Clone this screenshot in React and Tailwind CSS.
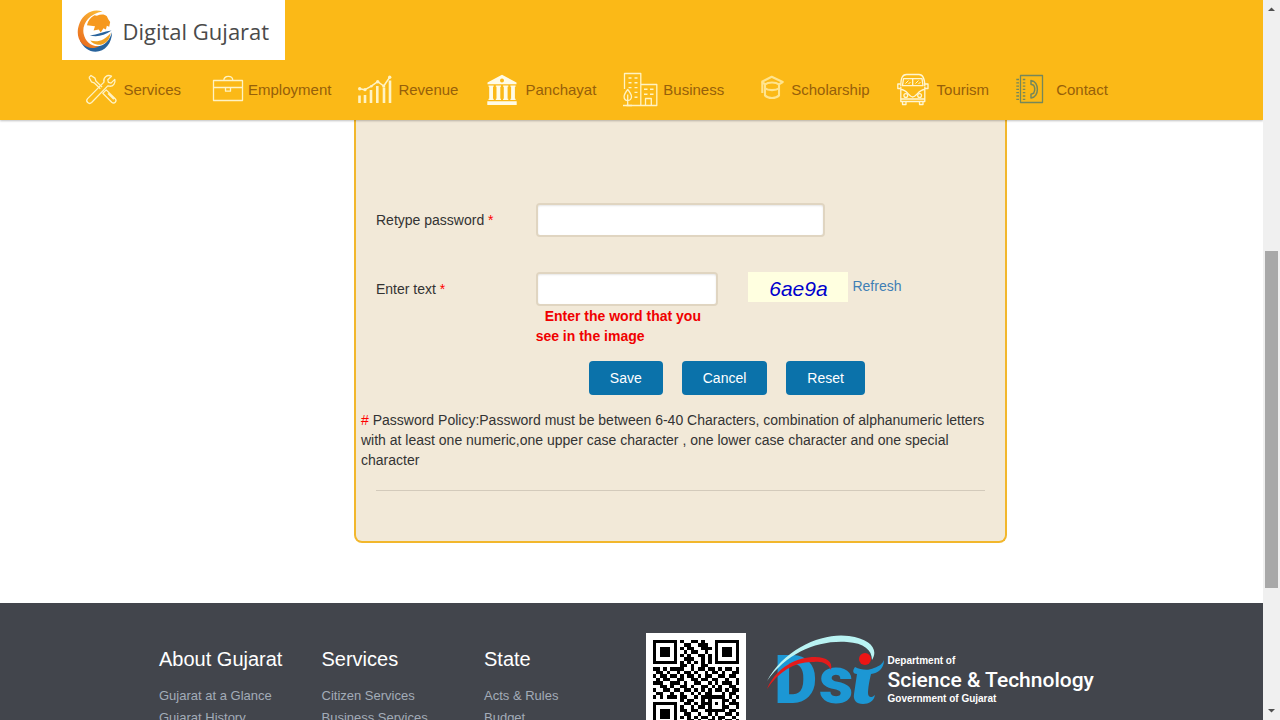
const navItems = [
  { label: "Services", Icon: ToolsIcon },
  { label: "Employment", Icon: BriefcaseIcon },
  { label: "Revenue", Icon: ChartIcon },
  { label: "Panchayat", Icon: BankIcon },
  { label: "Business", Icon: BuildingsIcon },
  { label: "Scholarship", Icon: ScholarIcon },
  { label: "Tourism", Icon: BusIcon },
  { label: "Contact", Icon: PhoneBookIcon },
];

const footerColumns = [
  {
    title: "About Gujarat",
    links: ["Gujarat at a Glance", "Gujarat History"],
  },
  {
    title: "Services",
    links: ["Citizen Services", "Business Services"],
  },
  {
    title: "State",
    links: ["Acts & Rules", "Budget"],
  },
];

const qrRows = [
  "1111111010011010001111111",
  "1000001001100111001000001",
  "1011101010110011101011101",
  "1011101001011001001011101",
  "1011101010100110101011101",
  "1000001001110010101000001",
  "1111111010101010101111111",
  "0000000011010011000000000",
  "1101011110010110110101101",
  "0110100101101001011010011",
  "1011011010110101100110110",
  "0101100110011011011001001",
  "1110011101001100101011101",
  "0011010011010011010100110",
  "1001101101101010101101011",
  "0110010010010101100010110",
  "1010111011001011111110101",
  "0000000010110010100011010",
  "1111111001101011101010111",
  "1000001010010110100011001",
  "1011101011011001111110110",
  "1011101001100100101001101",
  "1011101010101011010110010",
  "1000001000110100110101101",
  "1111111010011011001011011",
];

function NavSvg({ children, stroke = "#fff3c4" }) {
  return (
    <svg
      viewBox="0 0 40 40"
      className="h-10 w-10 shrink-0"
      fill="none"
      stroke={stroke}
      strokeWidth="1.3"
      strokeLinejoin="round"
      aria-hidden="true"
    >
      {children}
    </svg>
  );
}

function ToolsIcon() {
  return (
    <NavSvg>
      <path d="M27.5 6.2 23.8 9.8l.6 2.6 2.6.7 3.8-3.7c1 3.6-1.6 7.2-5.4 6.8l-1.6-.3L7.6 32.5c-2.6 2.5-6.5-1.2-4-3.9L20 12.1c-1.2-4.6 3-8 7.5-5.900Z" />
      <path d="m5 7.400 2-1.900 4 2.600.9 2.900 6.200 6.100M16.300 18.800l-6.200-6-2.700-1L5 7.400M20.500 21.600l1.700-1.700 9 8.800c2.200 2.500-.9 5.700-3.500 3.500l-8.900-8.900 1.700-1.700M24 23.500l5.800 5.800" />
    </NavSvg>
  );
}

function BriefcaseIcon() {
  return (
    <NavSvg>
      <path d="M5.5 10.5h29v20h-29zM5.5 17.5h29M15.8 10.500c0-5.400 9-5.400 9 0M17.500 17.500v3.700h5v-3.700" />
    </NavSvg>
  );
}

function ChartIcon() {
  return (
    <NavSvg>
      <path
        d="M1.5 25.500V33M7 25v8M13 20v13M19.300 16v17M26 17.500V33M32 10.500V33"
        strokeWidth="2.6"
      />
      <path d="m1.500 18.700 5.500 1 6.300-3.500 6.400-4.500 6 4.300 6-8.700" strokeWidth="1.5" />
      <g fill="#fff3c4" stroke="none">
        <circle cx="1.7" cy="18.7" r="1.7" />
        <circle cx="7" cy="19.7" r="1.6" />
        <circle cx="13.3" cy="16.2" r="1.3" />
        <circle cx="19.7" cy="11.7" r="1.7" />
        <circle cx="25.7" cy="16" r="1.6" />
        <circle cx="31.7" cy="7.3" r="1.7" />
      </g>
    </NavSvg>
  );
}

function BankIcon() {
  return (
    <NavSvg>
      <g fill="#fffbe6" stroke="none">
        <path
          fillRule="evenodd"
          d="M17 4.800 31.500 12.500v1.800h-29v-1.800ZM17 8.400a2 2 0 1 0 0 4 2 2 0 0 0 0-4Z"
        />
        <path d="M3.500 15.600h5.200v1.200H8v12h.7V30H3.500v-1.200h.7v-12h-.7ZM10.800 15.600H16v1.200h-.7v12h.7V30h-5.200v-1.200h.7v-12h-.7ZM18.100 15.600h5.200v1.200h-.7v12h.7V30h-5.200v-1.200h.7v-12h-.7ZM25.400 15.600h5.200v1.200h-.7v12h.7V30h-5.200v-1.200h.7v-12h-.7ZM2.300 31.200h29.400V35H2.300z" />
      </g>
    </NavSvg>
  );
}

function BuildingsIcon() {
  return (
    <NavSvg>
      <path d="M1.500 19V3.500h16.300v32H3.500M17.800 14.500h16v21h-16M22.500 35.500v-7h5.800v7" />
      <path d="M4.700 19.500c-2 2.500-3.600 5-3.600 7.300 0 5 7.400 5 7.400 0 0-2.300-1.700-4.800-3.800-7.300ZM4.700 24.500v11M0 35.500h9" />
      <path
        d="M5.500 8h3M11.500 8h3M5.500 12.800h3M11.500 12.800h3M5.500 17.600h3M11.500 17.600h3M11.500 22.400h3M11.500 27.200h3M21 19.300h3.500M27 19.300h3.500M21 24.300h3.500M27 24.300h3.500"
        strokeWidth="1.4"
      />
    </NavSvg>
  );
}

function ScholarIcon() {
  return (
    <NavSvg stroke="#ffe48e">
      <path
        d="m10.500 12 10.200-5.300L31.700 12l-3.700 2.400M10.500 12l3.500 2M11.300 12v11M14 14.500c3-2.600 11-2.600 14 0v3.800c-3 2.400-11 2.400-14 0v-3.800M14 18v7.500c3 3.300 11 3.300 14 0V18"
        strokeWidth="2.1"
      />
    </NavSvg>
  );
}

function BusIcon() {
  return (
    <NavSvg stroke="#fff6d2">
      <path d="M3.800 16.500C3.800 8.500 5 4.500 9.500 4.500H22c4.500 0 5.800 4 5.800 12M3.800 17v14.500h24V17M5.500 15.700l1-7h18.500l1 7ZM15.700 9v7" />
      <path d="M3.500 14H.8v4.500h2.700M28 14h3v4.500h-3M4 19.500c6 0 8 7.500 11.700 7.500s6-7.500 12-7.500M3.800 29h24M5.500 32v2.500h3.500V32M22.500 32v2.500H26V32" />
      <path d="m8.500 13.500 3-3M18.500 13.500l3-3M11.500 14l2-2M21.500 14l2-2" strokeWidth="1" />
      <circle cx="8.800" cy="25.500" r="1.900" />
      <circle cx="22.600" cy="25.500" r="1.900" />
    </NavSvg>
  );
}

function PhoneBookIcon() {
  return (
    <NavSvg stroke="#75875a">
      <path d="M4.500 5.500h22v27h-22z" />
      <path
        d="M.3 9.500h2.700M.3 12.800h2.700M.3 16.100h2.700M.3 19.400h2.700M.3 22.700h2.700M.3 26h2.700M.3 29.300h2.700M6.800 9.500h2.500M6.800 12.800h2.500M6.800 16.100h2.500M6.800 19.400h2.500M6.800 22.700h2.500M6.800 26h2.500M6.800 29.300h2.500"
        strokeWidth="1.3"
      />
      <path
        d="M15 10.500c8.500.5 8.500 17 0 17.500v-3.800l2.600-.9c1.500-2.600 1.500-5.500 0-8.100L15 14.300Z"
        strokeWidth="1.5"
      />
    </NavSvg>
  );
}

function LionLogo() {
  return (
    <svg viewBox="0 0 38 46" className="h-11 w-9 shrink-0" aria-hidden="true">
      <defs>
        <linearGradient id="ring" x1="0.6" y1="0" x2="0" y2="1">
          <stop offset="0" stopColor="#f9b233" />
          <stop offset="1" stopColor="#e8641b" />
        </linearGradient>
      </defs>
      <path
        d="M3 33c4 7.500 9.500 11.800 16.500 11.800C29.500 44.800 37 36 37 24c-2.500 9-8 15-16 15-7 0-13-1.500-18-6Z"
        fill="#28639c"
      />
      <path
        d="M27 2.500C17-1.500 7 4.500 3 14-.5 22.500 0 30.500 5.500 36.500c5 5 12.500 5.500 18 2.500C14.500 39.500 9 34.500 7 26 5 16.500 12 5 27 2.500Z"
        fill="url(#ring)"
      />
      <path
        d="M35.500 25c-1 8-6.500 13-13.500 12.500-3-.3-6-1.500-8-4.500 8 2.500 15.500-.5 21.500-8Z"
        fill="#f0a020"
      />
      <path
        d="M36.500 22.500C28 23.500 22 27 13.500 27.500c7 2.500 15 .5 23-5Z"
        fill="#28639c"
      />
      <path
        d="M10.500 17c1-5 4-8.500 8-10.500l2.500.5C25 5 29 5 31.500 7.500l1.500 3 2 3-1 5-2.500-1-1 4-2.500-1.500-3 4.500-2-3-5.500 1 1.500-4.500Z"
        fill="#f6991e"
      />
    </svg>
  );
}

function Header() {
  return (
    <header className="relative z-10 bg-[#fbb917] shadow-[0_1px_2px_rgba(0,0,0,0.25)]">
      <div className="mx-auto max-w-[1170px] px-[15px]">
        <a
          href="#home"
          className="flex h-[60px] w-[223px] items-center gap-2.5 bg-white pt-0.5 pl-[15px] font-['Open_Sans','Liberation_Sans',sans-serif] text-[22px] text-[#4a4a4a]"
        >
          <LionLogo />
          <span className="whitespace-nowrap">Digital Gujarat</span>
        </a>

        <nav className="flex h-[60px] items-center gap-[27px] pl-[22px]">
          {navItems.map(({ label, Icon }) => (
            <a
              key={label}
              href={`#${label.toLowerCase()}`}
              className="flex items-center text-[15px] text-[#96600a]"
            >
              <Icon />
              {label}
            </a>
          ))}
        </nav>
      </div>
    </header>
  );
}

function TextField({ id, type = "text" }) {
  return (
    <input
      id={id}
      type={type}
      className="block h-[34px] w-full rounded border-2 border-[#e0d5c1] bg-white px-3 text-sm text-[#333] shadow-[inset_0_1px_2px_rgba(0,0,0,0.1)] outline-none"
    />
  );
}

function FormLabel({ htmlFor, children }) {
  return (
    <label htmlFor={htmlFor} className="col-span-3 px-[15px] pt-[7px]">
      {children} <span className="text-[#f00]">*</span>
    </label>
  );
}

function FormButton({ type = "button", children }) {
  return (
    <button
      type={type}
      className="h-[34px] rounded bg-[#0b72aa] px-[21px] text-sm text-white"
    >
      {children}
    </button>
  );
}

function PasswordForm() {
  return (
    <form
      onSubmit={(event) => event.preventDefault()}
      className="rounded-b-lg border-2 border-t-0 border-[#f2b72c] bg-[#f2e9d8] px-[5px] pt-[83px] pb-[50px]"
    >
      <div className="grid grid-cols-12">
        <FormLabel htmlFor="retype">Retype password</FormLabel>
        <div className="col-span-6 px-[15px]">
          <TextField id="retype" type="password" />
        </div>
      </div>

      <div className="mt-[35px] grid grid-cols-12">
        <FormLabel htmlFor="captcha">Enter text</FormLabel>
        <div className="col-span-4 px-[15px]">
          <TextField id="captcha" />
          <p className="indent-[9px] font-bold text-[#f00000]">
            Enter the word that you see in the image
          </p>
        </div>
        <div className="col-span-5 flex items-start gap-1 px-[15px]">
          <span className="h-[30px] w-[100px] bg-[#ffffe0] text-center text-[21px] leading-[34px] text-[#0000cd] italic">
            6ae9a
          </span>
          <a href="#refresh" className="pt-1 text-[#3f7fb5]">
            Refresh
          </a>
        </div>
      </div>

      <div className="mt-[15px] grid grid-cols-12">
        <div className="col-span-8 col-start-5 flex gap-[19px] px-[15px]">
          <FormButton type="submit">Save</FormButton>
          <FormButton>Cancel</FormButton>
          <FormButton type="reset">Reset</FormButton>
        </div>
      </div>

      <p className="mt-[15px]">
        <span className="text-[#f00]">#</span> Password Policy:Password must be
        between 6-40 Characters, combination of alphanumeric letters with at
        least one numeric,one upper case character , one lower case character
        and one special character
      </p>

      <hr className="mx-[15px] mt-5 border-[#d3cabb]" />
    </form>
  );
}

function QrCode() {
  return (
    <svg
      viewBox="-2 -2 29 29"
      className="h-[100px] w-[100px] shrink-0 bg-white"
      shapeRendering="crispEdges"
      role="img"
      aria-label="QR code"
    >
      {qrRows.map((row, y) =>
        row
          .split("")
          .map((cell, x) =>
            cell === "1" ? (
              <rect key={`${x}-${y}`} x={x} y={y} width="1" height="1" />
            ) : null
          )
      )}
    </svg>
  );
}

function DstLogo() {
  return (
    <div className="flex items-start">
      <svg
        viewBox="0 0 122 80"
        className="h-20 w-[122px] shrink-0"
        aria-hidden="true"
      >
        <g
          fill="#1c97d4"
          fontFamily="Roboto,'Liberation Sans',sans-serif"
          fontWeight="900"
          fontSize="67"
        >
          <text x="8" y="70">
            D
          </text>
          <text x="53" y="70">
            s
          </text>
        </g>
        <path
          d="M89 34c6 3 13 4 19 1 6-2 9-5 10-8 0 9-6 13-13 14-2 8-3 15-3 19 0 5 4 5 7 2-1 6-6 9-12 9-7 0-10-4-9-10l3-20c-4 0-5-3-2-7Z"
          fill="#1c97d4"
        />
        <path
          d="M1 48C18 15 58-1 83 3c21 3 30 13 23 24 0-10-8-17-25-18C51 7 21 20 1 48Z"
          fill="#b9f3f3"
        />
        <path
          d="M1 56C11 33 32 24 49 24c12 0 18 5 16 13-3-6-8-9-17-8C30 28 13 38 1 56Z"
          fill="#e31b1b"
        />
        <circle cx="99" cy="26" r="6" fill="#ec1515" />
      </svg>
      <div className="flex flex-col gap-px pt-[22px] whitespace-nowrap text-white">
        <p className="text-[10px] leading-3 font-bold">Department of</p>
        <p className="font-[Roboto,'Liberation_Sans',sans-serif] text-[21px] leading-6 font-medium">
          Science &amp; Technology
        </p>
        <p className="text-[10px] leading-3 font-bold">
          Government of Gujarat
        </p>
      </div>
    </div>
  );
}

function Footer() {
  return (
    <footer className="mt-[60px] bg-[#42454c] py-[30px]">
      <div className="mx-auto grid max-w-[975px] grid-cols-12">
        {footerColumns.map((column) => (
          <div key={column.title} className="col-span-2 pt-3 pl-[15px] whitespace-nowrap">
            <h4 className="text-xl leading-7 text-white">{column.title}</h4>
            <ul className="mt-3 text-[13px] leading-[22px] text-[#a3acb8]">
              {column.links.map((link) => (
                <li key={link}>
                  <a href="#footer">{link}</a>
                </li>
              ))}
            </ul>
          </div>
        ))}

        <div className="col-span-6 flex items-start gap-5 pl-3.5">
          <QrCode />
          <DstLogo />
        </div>
      </div>
    </footer>
  );
}

function ScrollTrack() {
  return (
    <div
      className="flex w-[17px] shrink-0 flex-col items-center bg-[#f0f0f0]"
      aria-hidden="true"
    >
      <svg viewBox="0 0 17 17" className="h-[17px] w-[17px]">
        <path d="M5 11h7L8.500 7.500Z" fill="#505050" />
      </svg>
      <div className="flex-[234]" />
      <div className="w-[13px] flex-[337] bg-[#a8a8a8]" />
      <div className="flex-[115]" />
      <svg viewBox="0 0 17 17" className="h-[17px] w-[17px]">
        <path d="M5 6h7L8.500 9.500Z" fill="#505050" />
      </svg>
    </div>
  );
}

export default function App() {
  return (
    <div className="flex h-screen overflow-hidden bg-white font-['Liberation_Sans',Arial,sans-serif] text-sm leading-5 text-[#333]">
      <div className="min-w-0 flex-1 overflow-hidden">
        <Header />
        <main className="mx-auto grid max-w-[1170px] grid-cols-12">
          <div className="col-span-7 col-start-4 px-[15px]">
            <PasswordForm />
          </div>
        </main>
        <Footer />
      </div>
      <ScrollTrack />
    </div>
  );
}
